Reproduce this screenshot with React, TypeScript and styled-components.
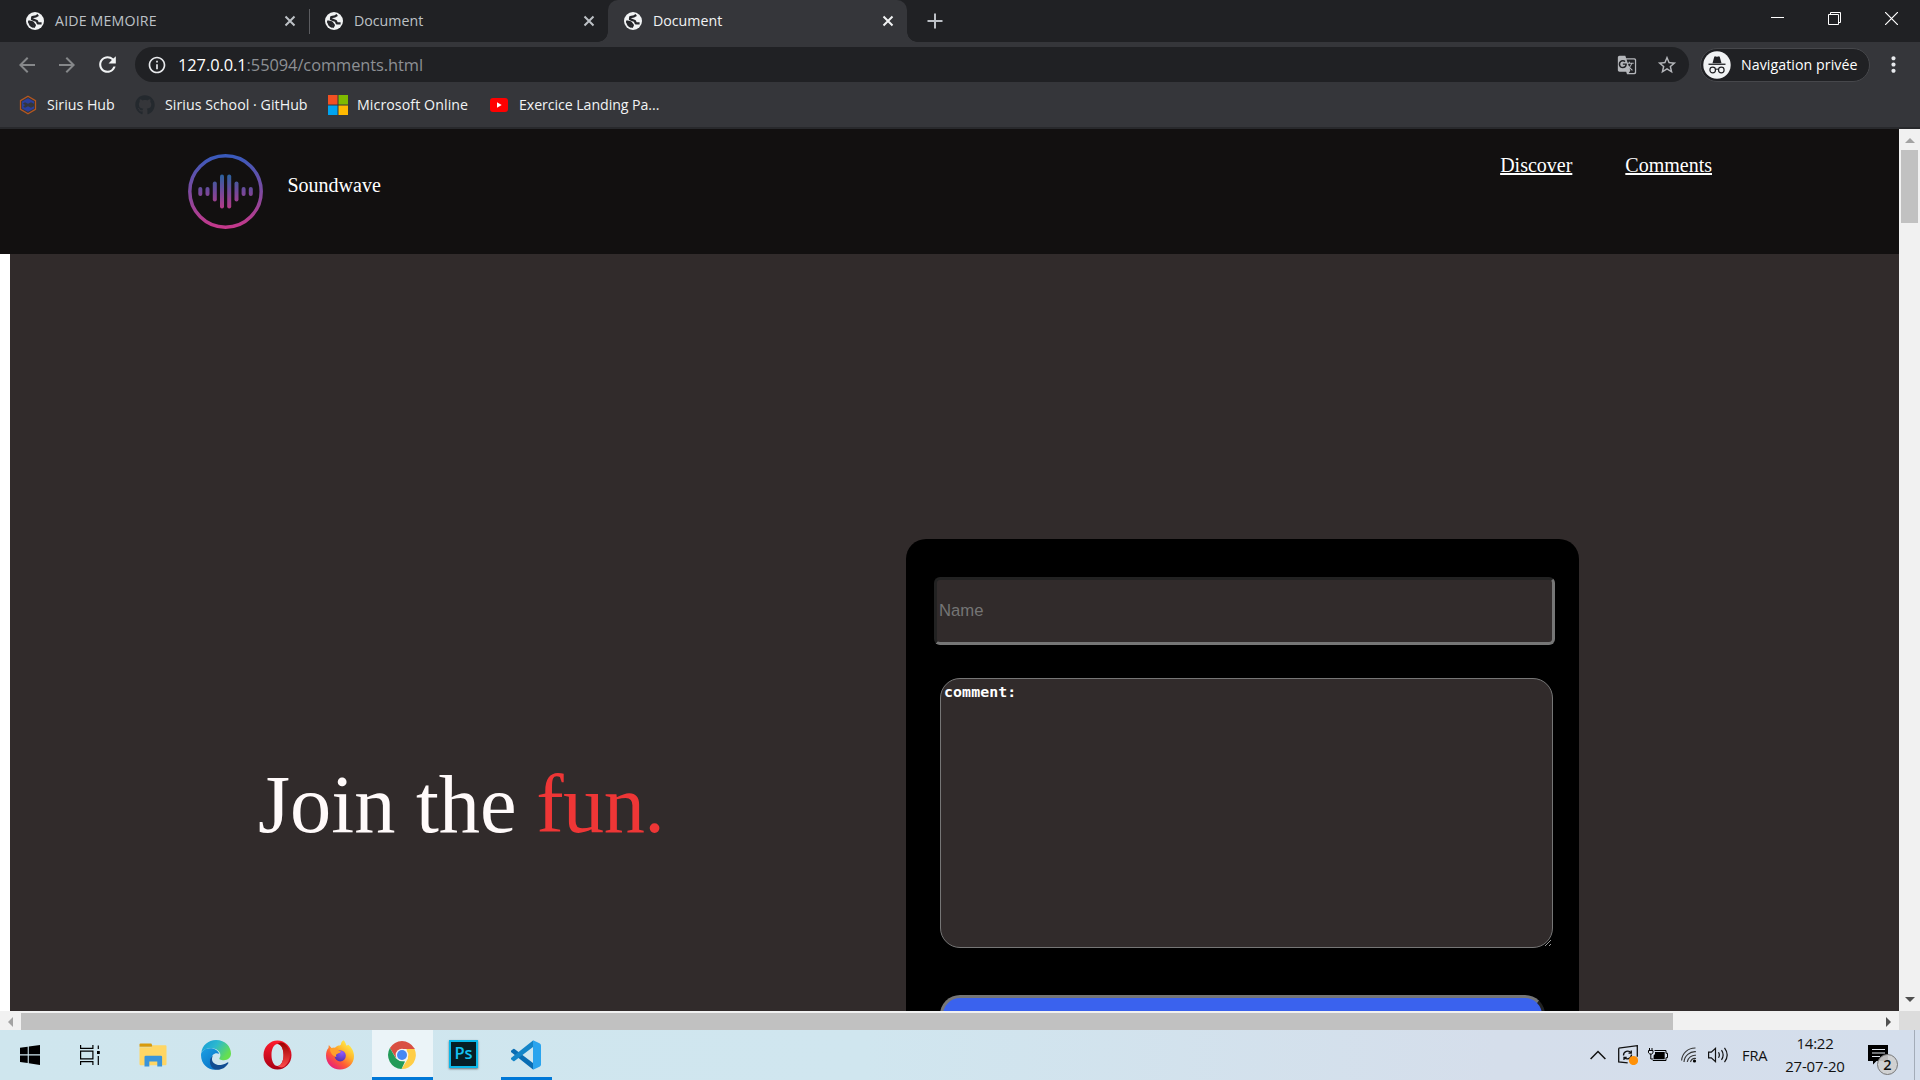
import React from 'react';
import styled, { createGlobalStyle } from 'styled-components';
import { MdArrowBack, MdArrowForward, MdRefresh, MdInfoOutline, MdStarBorder, MdGTranslate, MdMoreVert } from 'react-icons/md';
import { FaGithub } from 'react-icons/fa';

const ui = `"Open Sans", "Noto Sans", sans-serif`;
const serif = `"Liberation Serif", "Times New Roman", serif`;

const GlobalStyle = createGlobalStyle`
  * { box-sizing: border-box; }
  html, body { margin: 0; padding: 0; background: #202124; overflow: hidden; }
  svg { display: block; flex: none; }
`;

const Desktop = styled.div`
  width: 1920px;
  height: 1080px;
  display: flex;
  flex-direction: column;
  overflow: hidden;
  font-family: ${ui};
`;

/* Browser frame */
const TabStrip = styled.div`
  height: 42px;
  flex: none;
  display: flex;
  background: #202124;
  padding-left: 10px;
`;
const Tab = styled.div<{ $active?: boolean; $w: number; $pl?: number }>`
  position: relative;
  width: ${p => p.$w}px;
  height: 42px;
  display: flex;
  align-items: center;
  padding: 0 11px 0 ${p => p.$pl ?? 16}px;
  color: ${p => (p.$active ? '#f1f3f4' : '#bdc1c6')};
  background: ${p => (p.$active ? '#35363a' : 'transparent')};
  border-radius: 10px 10px 0 0;
  ${p => p.$active && `
    &::before, &::after {
      content: '';
      position: absolute;
      bottom: 0;
      width: 10px;
      height: 10px;
    }
    &::before { left: -10px; background: radial-gradient(circle at 0 0, #202124 9.5px, #35363a 10px); }
    &::after { right: -10px; background: radial-gradient(circle at 100% 0, #202124 9.5px, #35363a 10px); }
  `}
`;
const TabTitle = styled.span<{ $ls?: number }>`
  flex: 1;
  margin-left: 11px;
  font-size: 14.2px;
  line-height: 20px;
  padding-bottom: 1px;
  letter-spacing: ${p => p.$ls ?? 0}px;
  white-space: nowrap;
`;
const TabDivider = styled.div`
  width: 1px;
  height: 25px;
  margin-top: 9px;
  background: #5b5c60;
`;
const NewTab = styled.div`
  padding: 13px 0 0 20px;
`;
const WindowButtons = styled.div`
  display: flex;
  margin-left: auto;
  gap: 44px;
  padding: 12px 22px 0 0;
`;

const Toolbar = styled.div`
  height: 45px;
  flex: none;
  display: flex;
  align-items: center;
  background: #35363a;
  padding: 0 14px 0 15px;
`;
const NavButton = styled.div<{ $dim?: boolean; $ml?: number }>`
  color: ${p => (p.$dim ? '#86888a' : '#f1f3f4')};
  margin-left: ${p => p.$ml ?? 0}px;
`;
const AddressBar = styled.div`
  width: 1554px;
  height: 35px;
  margin: 0 11px 0 15px;
  border-radius: 18px;
  background: #202124;
  display: flex;
  align-items: center;
  padding: 0 11px 0 12px;
  color: #e8eaed;
`;
const Url = styled.span`
  flex: 1;
  margin-left: 11px;
  font-size: 16.4px;
  line-height: 22px;
  letter-spacing: -0.06px;
  color: #8d9094;
  b { font-weight: 400; color: #fff; }
`;
const OmniIcon = styled.span`
  color: #b4b6ba;
  margin-left: 19px;
`;
const Incognito = styled.div`
  width: 170px;
  height: 34px;
  border-radius: 17px;
  border: 1px solid #46474b;
  background: #202124;
  display: flex;
  align-items: center;
  padding-left: 2px;
  gap: 10px;
  color: #fff;
  font-size: 14.2px;
  letter-spacing: 0.06px;
  white-space: nowrap;
`;
const Menu = styled.div`
  color: #e8eaed;
  margin-left: 11px;
`;
const Bookmarks = styled.div`
  height: 42px;
  flex: none;
  display: flex;
  background: #35363a;
  border-bottom: 2px solid #28292c;
  padding: 0 0 5px 19px;
  align-items: center;
`;
const Bookmark = styled.div<{ $w: number; $gap: number; $ls?: number }>`
  display: flex;
  align-items: center;
  width: ${p => p.$w}px;
  gap: ${p => p.$gap}px;
  font-size: 14.2px;
  line-height: 20px;
  letter-spacing: ${p => p.$ls ?? 0}px;
  color: #f1f3f4;
  white-space: nowrap;
`;

/* Page */
const Viewport = styled.div`
  height: 882px;
  flex: none;
  display: flex;
`;
const Page = styled.div`
  width: 1899px;
  height: 882px;
  background: #fff;
  overflow: hidden;
`;
const SiteHeader = styled.header`
  height: 125px;
  background: #121010;
  display: flex;
  padding: 25px 187px 0 188px;
  font-family: ${serif};
  font-size: 20px;
  line-height: 23px;
  color: #fff;
`;
const Brand = styled.span`
  margin: 20px 0 0 24.5px;
`;
const SiteNav = styled.nav`
  display: flex;
  gap: 53px;
  margin-left: auto;
  a { color: #fff; text-decoration: underline; text-decoration-thickness: 2px; text-underline-offset: 1px; }
`;
const Hero = styled.main`
  margin-left: 10px;
  height: 757px;
  background: #312b2b;
  display: flex;
  overflow: hidden;
`;
const Headline = styled.h1`
  width: 896px;
  margin: 0;
  padding: 504px 0 0 248px;
  font: 400 82.4px/94px ${serif};
  color: #fffafa;
  white-space: nowrap;
  span { color: #ee3636; letter-spacing: -0.6px; margin-left: -1px; }
`;
const Card = styled.form`
  width: 673px;
  height: 640px;
  margin-top: 285px;
  background: #000;
  border-radius: 20px;
  padding: 38px 24px 0 28px;
  display: flex;
  flex-direction: column;
`;
const NameInput = styled.input`
  width: 621px;
  height: 68px;
  border: 3px solid;
  border-color: #222 #767676 #767676 #222;
  border-radius: 6px;
  background: #312b2b;
  padding: 0 2px;
  font: 16.67px "Liberation Sans", Arial, sans-serif;
  &::placeholder { color: #757575; opacity: 1; }
`;
const CommentBox = styled.textarea`
  width: 613px;
  height: 270px;
  margin: 33px 0 0 6px;
  border: 1px solid #767676;
  border-radius: 20px;
  background: #312b2b;
  color: #fff;
  padding: 3px;
  font: bold 14.9px/20px "DejaVu Sans Mono", monospace;
  letter-spacing: 0.08px;
  resize: both;
  outline: none;
`;
const Submit = styled.button`
  width: 605px;
  height: 70px;
  flex: none;
  margin: 47px 0 0 6px;
  border: 3px solid;
  border-color: #767676 #222 #222 #767676;
  border-radius: 20px;
  background: #3a62ee;
`;

/* Scrollbars */
const VScroll = styled.div`
  width: 21px;
  height: 882px;
  background: #f1f1f1;
  display: flex;
  flex-direction: column;
  align-items: center;
`;
const VThumb = styled.div`
  width: 17px;
  height: 73px;
  margin-top: 7px;
  background: #c1c1c1;
`;
const HScroll = styled.div`
  height: 19px;
  flex: none;
  display: flex;
  background: #f1f1f1;
`;
const HThumb = styled.div`
  width: 1652px;
  height: 17px;
  margin: 2px 0 0 8px;
  background: #c1c1c1;
`;
const Corner = styled.div`
  width: 21px;
  height: 19px;
  margin-left: 8px;
  background: #dcdcdc;
`;
const Arrow = styled.div<{ $dir: 'up' | 'down' | 'left' | 'right' }>`
  width: 0;
  height: 0;
  flex: none;
  border: 5px solid transparent;
  ${p => p.$dir === 'up' && 'border-top: 0; border-bottom-color: #a3a3a3; margin-top: 9px;'}
  ${p => p.$dir === 'down' && 'border-bottom: 0; border-top-color: #505050; margin: auto 0 9px;'}
  ${p => p.$dir === 'left' && 'border-left: 0; border-right-color: #a3a3a3; margin: 6px 0 0 8px;'}
  ${p => p.$dir === 'right' && 'border-right: 0; border-left-color: #505050; margin: 6px 0 0 auto;'}
`;

/* Taskbar */
const Taskbar = styled.div`
  height: 50px;
  flex: none;
  display: flex;
  background: linear-gradient(90deg, #cfe6ee 0%, #d0e6ef 45%, #d5deeb 78%, #d4deec 100%);
`;
const TaskItem = styled.div<{ $w: number; $active?: boolean; $bar?: boolean }>`
  width: ${p => p.$w}px;
  height: 50px;
  display: flex;
  align-items: center;
  justify-content: center;
  background: ${p => (p.$active ? '#ebf4f8' : 'transparent')};
  border-bottom: ${p => (p.$bar ? '3px solid #0078d7' : '0')};
  padding-top: ${p => (p.$bar ? 3 : 0)}px;
  padding-right: ${p => (p.$bar ? 2 : 0)}px;
`;
const Spacer = styled.div<{ $w: number }>`
  width: ${p => p.$w}px;
`;
const PsBox = styled.div`
  width: 29px;
  height: 28px;
  border: 2px solid #0bb8ea;
  background: #061e26;
  color: #14c0f2;
  font-size: 16.5px;
  font-weight: 600;
  line-height: 22px;
  text-align: center;
  margin-bottom: 2px;
  box-shadow: 0 1px 2px rgba(0, 0, 0, 0.5);
`;
const Tray = styled.div`
  margin-left: auto;
  width: 330px;
  display: flex;
  align-items: center;
  color: #111;
`;
const Lang = styled.span`
  width: 43px;
  margin-left: 13px;
  font-size: 14.6px;
  line-height: 20px;
  letter-spacing: -0.1px;
`;
const Clock = styled.div`
  width: 60px;
  display: flex;
  flex-direction: column;
  align-items: center;
  font-size: 15px;
  line-height: 23px;
  white-space: nowrap;
  letter-spacing: -0.2px;
`;
const Notify = styled.div`
  position: relative;
  width: 30px;
  height: 32px;
  margin: 12px 0 0 23px;
`;
const Badge = styled.span`
  position: absolute;
  left: 9px;
  top: 9px;
  width: 21px;
  height: 21px;
  border-radius: 50%;
  border: 1px solid #777;
  background: rgba(207, 207, 207, 0.9);
  font-size: 14.5px;
  font-weight: 600;
  line-height: 19px;
  text-align: center;
`;
const ShowDesktop = styled.div`
  width: 6px;
  height: 50px;
  margin-left: auto;
  border-left: 1px solid #a3acb8;
`;

const CloseIcon = () => (
  <svg width="16" height="16" viewBox="0 0 16 16" stroke="currentColor" strokeWidth="2"><path d="M3.500 3.500 12.500 12.500M12.500 3.500 3.500 12.500" /></svg>
);

const Globe = () => (
  <svg width="18" height="18" viewBox="0 0 18 18">
    <circle cx="9" cy="9" r="9" fill="#f1f3f4" />
    <g fill="none" stroke="#25262a" strokeWidth="2.300" strokeLinejoin="round">
      <path d="M12.300 3 10 4.300 6.300 5.200 6 7.200 10.800 9 11.800 11.300 15.600 11.300" />
      <path d="M2.300 9.500 6.700 10.300 8.800 13.200 7.600 15.600" />
    </g>
    <path d="M2 9 5.500 9.500 8 12.500 7.300 15.900Q2.300 14.500 2 9z" fill="#25262a" />
  </svg>
);

const IncognitoIcon = () => (
  <svg width="28" height="28" viewBox="0 0 28 28">
    <circle cx="14" cy="14" r="13.700" fill="#f1f3f4" />
    <path d="M9.500 12.200 11.200 6q.4-1 1.400-.6l1.400.4 1.400-.4q1-.4 1.400.6l1.700 6.200z" fill="#202124" />
    <rect x="5.500" y="12.600" width="17" height="1.300" fill="#202124" />
    <g fill="none" stroke="#202124" strokeWidth="1.200">
      <circle cx="9.700" cy="19" r="2.800" />
      <circle cx="18.300" cy="19" r="2.800" />
      <path d="M12.500 18.500q1.500-1 3 0" />
    </g>
  </svg>
);

const SoundLogo = () => {
  const bars: [number, number][] = [[12.3, 4.5], [19.5, 4.5], [26.8, 10], [34, 17], [41.2, 17], [48.5, 10], [55.6, 4.5], [62.8, 4.5]];
  return (
    <svg width="75" height="75" viewBox="0 0 75 75">
      <defs>
        <linearGradient id="ring" gradientUnits="userSpaceOnUse" x1="0" y1="0" x2="0" y2="75">
          <stop offset="0" stopColor="#365bbd" />
          <stop offset=".5" stopColor="#7d4a9f" />
          <stop offset="1" stopColor="#c8378a" />
        </linearGradient>
        <linearGradient id="bars" gradientUnits="userSpaceOnUse" x1="0" y1="20" x2="0" y2="55">
          <stop offset="0" stopColor="#27639f" />
          <stop offset=".5" stopColor="#71489a" />
          <stop offset="1" stopColor="#b83a86" />
        </linearGradient>
      </defs>
      <circle cx="37.5" cy="37.5" r="35.7" fill="none" stroke="url(#ring)" strokeWidth="3.5" />
      {bars.map(([x, h]) => (
        <rect key={x} x={x - 2} y={37.5 - h} width="4" height={h * 2} rx="2" fill="url(#bars)" />
      ))}
    </svg>
  );
};

const SiriusIcon = () => (
  <svg width="18" height="20" viewBox="0 0 18 20">
    <path d="M9 1.300 16.500 5.700v8.600L9 18.700 1.500 14.300V5.700z" fill="none" stroke="#b5571f" strokeWidth="1.300" />
    <path d="M9 3.200 15 6.500v2.200l-3-1.500-3 1.500-3-1.500-3 2V6.500zM3 11l3 1.800 3-1.500 3 1.500 3-1.500v2.200l-6 3.300-6-3.300z" fill="#2b3f9b" />
    <path d="M3 8l3 2-3 3z" fill="#2b3f9b" />
  </svg>
);

const MicrosoftIcon = () => (
  <svg width="20" height="20" viewBox="0 0 20 20">
    <path d="M0 0h9.500v9.500H0z" fill="#f25022" />
    <path d="M10.500 0H20v9.500h-9.500z" fill="#7fba00" />
    <path d="M0 10.500h9.500V20H0z" fill="#00a4ef" />
    <path d="M10.500 10.500H20V20h-9.500z" fill="#ffb900" />
  </svg>
);

const YoutubeIcon = () => (
  <svg width="18" height="14" viewBox="0 0 18 14">
    <rect width="18" height="14" rx="3" fill="#f00" />
    <path d="M7 4.200v5.600L11.700 7z" fill="#fff" />
  </svg>
);

const WindowsIcon = () => (
  <svg width="20" height="20" viewBox="0 0 20 20">
    <path d="M0 2.800 7.700 1.700v7.600H0zM8.800 1.500 20 0v9.300H8.800zM0 10.400h7.700V18L0 17zM8.800 10.400H20V20L8.800 18.300z" fill="#000" />
  </svg>
);

const TaskViewIcon = () => (
  <svg width="20" height="20" viewBox="0 0 20 20" fill="none" stroke="#000" strokeWidth="1.200">
    <path d="M.600 0v3.400h12.300V0M.600 20v-3.400h12.300V20M.600 6.200h12.300v7.600H.600zM18.300.500v3.500M18.300 11v9" />
    <path d="M17 6h2.800v3H17z" fill="#000" stroke="none" />
  </svg>
);

const FolderIcon = () => (
  <svg width="28" height="24" viewBox="0 0 28 24">
    <path d="M.500 1.500Q.500.500 1.500.500h10.800l1.600 3.300H.500z" fill="#d99a0a" />
    <path d="M.500 4.200h11.700l2-1.900h12.300q1 0 1 1V21q0 1.200-1.200 1.200H1.700Q.500 22.200.500 21z" fill="#ffd664" />
    <path d="M5.500 23.500V14q0-1.300 1.300-1.300h15q1.300 0 1.300 1.300v9.500h-4.800v-5h-8v5z" fill="#3994da" />
  </svg>
);

const EdgeIcon = () => (
  <svg width="30" height="30" viewBox="0 0 30 30">
    <defs>
      <linearGradient id="edgeTop" x1="0" y1="0" x2="1" y2=".5">
        <stop offset="0" stopColor="#1499d8" /><stop offset=".5" stopColor="#2cb8cf" /><stop offset="1" stopColor="#66df4f" />
      </linearGradient>
      <linearGradient id="edgeLeft" x1="0" y1="0" x2=".8" y2="1">
        <stop offset="0" stopColor="#1ba0e3" /><stop offset="1" stopColor="#0870c5" />
      </linearGradient>
    </defs>
    <path d="M.300 13C1 5.500 7.200 0 15 0c9.500 0 15 7 15 13.500 0 4.500-3.500 6.700-7 6.700-3.600 0-5.300-1.200-4.500-2.300 2.400-3.400-.200-8-5-9.200C7.500 7.500 2 9.200.300 13z" fill="url(#edgeTop)" />
    <path d="M0 15C0 11 4 8.200 9.200 8.200c4.700 0 8 2.600 9.100 5.600-4-2-7.800.700-7.800 5 0 5 4.800 9.200 9 9.500C11.500 32.500 0 27 0 15z" fill="url(#edgeLeft)" />
    <path d="M11.900 15.700c-3.300 6 2.700 10.600 9 9.100 2.600-.600 4.300-1.800 5.600-2.400.700-.300 1.200.300.800.900C22.500 31.500 11.500 32 9.300 24.500c-1-3.600 0-7 2.600-8.800z" fill="#124d92" />
  </svg>
);

const OperaIcon = () => (
  <svg width="29" height="30" viewBox="0 0 29 30">
    <defs>
      <linearGradient id="operaL" x1="0" y1="0" x2="0" y2="1"><stop offset="0" stopColor="#ff1b2d" /><stop offset="1" stopColor="#a70014" /></linearGradient>
      <linearGradient id="operaR" x1="0" y1="0" x2="0" y2="1"><stop offset="0" stopColor="#9c0000" /><stop offset="1" stopColor="#ff4b4b" /></linearGradient>
    </defs>
    <path fillRule="evenodd" d="M14.500.500a14 14.500 0 1 0 0 29 14 14.500 0 1 0 0-29zM14.500 4c3.700 0 6 5 6 11s-2.300 11-6 11-6-5-6-11 2.300-11 6-11z" fill="url(#operaL)" />
    <path d="M14.500 4c1.500-1.500 4.500-2 7-.500A14 14.500 0 0 1 21.500 26.500c-2.500 1.500-5.500 1-7-.500 3.700 0 6-5 6-11s-2.300-11-6-11z" fill="url(#operaR)" />
  </svg>
);

const FirefoxIcon = () => (
  <svg width="28" height="30" viewBox="0 0 28 30">
    <defs>
      <linearGradient id="fox" x1=".9" y1=".1" x2=".2" y2="1">
        <stop offset="0" stopColor="#fff44f" /><stop offset=".35" stopColor="#ffb52b" /><stop offset=".65" stopColor="#ff5a36" /><stop offset="1" stopColor="#e31587" />
      </linearGradient>
      <radialGradient id="foxGlobe" cx=".65" cy=".2" r=".9"><stop offset="0" stopColor="#9059ff" /><stop offset="1" stopColor="#4b2fa8" /></radialGradient>
    </defs>
    <path d="M17.500.300c1.500 1.200 2.300 3 2.800 5.200 1-.100 1.500-.300 2-.800C25.500 7 28 11.500 28 16c0 8-6 13.500-14 13.500S0 23.500 0 15.500c0-3.300 1-6 2.500-7.500l.300-3 2.700 3 3.500-.300C10.500 6 11.500 6 12.500 5.500c1.500 0 2.300-.500 2.500-1.500.3-1.500 1-3 2.500-3.700z" fill="url(#fox)" />
    <circle cx="14.200" cy="15.800" r="5.600" fill="url(#foxGlobe)" />
    <path d="M4 8.500c2.500-1.200 5.500-1 8 .5-.500 1.500 1 2 3 2.300-.5 1.700-2.500 2-3.500 2.400-1.500.600-2 1.800-1 3.300-3.500-.500-6.500-4-6.500-8.500z" fill="#ffa02c" />
  </svg>
);

const ChromeIcon = () => (
  <svg width="28" height="30" viewBox="0 0 28 30">
    <path d="M1.900 8A14 14 0 0 1 26.100 8L27 9H14L8 18z" fill="#d94f42" />
    <path d="M26.500 9A14 14 0 0 1 13.500 29L20 18.500 18.500 9z" fill="#ffcd46" />
    <path d="M1.900 8 8 18.500 14 21l3 .5L13.500 29A14 14 0 0 1 1.900 8z" fill="#229b58" />
    <circle cx="14" cy="15" r="6.300" fill="#f3f3f3" />
    <circle cx="14" cy="15" r="5" fill="#4688f4" />
  </svg>
);

const CodeIcon = () => (
  <svg width="30" height="30" viewBox="0 0 30 30">
    <path d="M0 10.800 2.200 9q.6-.500 1.300 0L22 23v6.500L.300 12.300q-.8-.700-.300-1.500z" fill="#0a6db3" />
    <path d="M0 19.200 2.200 21q.6.500 1.300 0L22 7V.500L.300 17.700q-.8.700-.300 1.500z" fill="#1485c8" />
    <path d="M22 .300 28.500 3.300Q30 4 30 5.500v19q0 1.500-1.500 2.200L22 29.700z" fill="#2aa4ee" />
  </svg>
);

const TrayChevron = () => (
  <svg width="16" height="10" viewBox="0 0 16 10" fill="none" stroke="#111" strokeWidth="1.500"><path d="M.600 9 8 1.500 15.400 9" /></svg>
);
const UpdateIcon = () => (
  <svg width="20" height="20" viewBox="0 0 20 20" fill="none" stroke="#111" strokeWidth="1.300">
    <path d="M.700 3.200 19.300.700v11M.700 3.200v13.600l9 1" />
    <path d="M5.500 10.500a4.200 4.200 0 0 1 7.500-2.700M13.300 5.500v2.700h-2.800M13.500 9.500a4.200 4.200 0 0 1-7 3.200M6 15v-2.500h2.700" />
    <circle cx="15.500" cy="15.500" r="4.600" fill="#ff9108" stroke="none" />
  </svg>
);
const BatteryIcon = () => (
  <svg width="20" height="14" viewBox="0 0 20 14">
    <path d="M1.500 0v2.500M4 0v2.500M2.800 6v5h2.500" fill="none" stroke="#000" strokeWidth="1" />
    <path d="M.500 2.500H5v2.300L3.700 6H1.800L.500 4.800z" fill="#dbe2ed" stroke="#000" strokeWidth="1" />
    <path d="M6.500 2.500H18v2.800h1.500v4.400H18v2.800H4.800" fill="none" stroke="#000" />
    <path d="M7 4h9.700v7.200H5.600V7.500L7 6z" fill="#000" />
  </svg>
);
const WifiIcon = () => (
  <svg width="16" height="16" viewBox="0 0 16 16" fill="none" stroke="#333" strokeWidth="1.100">
    <path d="M.600 13.500A13.500 13.500 0 0 1 14.500 1M3 15A11 11 0 0 1 15 4.700M6.200 15A8 8 0 0 1 15 8.300M9.500 15A5 5 0 0 1 15 11.500" />
    <circle cx="13.500" cy="14" r="1.600" fill="#000" stroke="none" />
  </svg>
);
const VolumeIcon = () => (
  <svg width="21" height="18" viewBox="0 0 21 18" fill="none" stroke="#111" strokeWidth="1.200">
    <path d="M.600 6.200h2.700L7.500 2.300v13.400l-4.200-3.900H.600z" />
    <path d="M10.500 6.300q1.700 2.700 0 5.400M13.500 4.200q3.300 4.800 0 9.600M16.500 1.800q5.400 7.200 0 14.400" />
  </svg>
);
const ActionIcon = () => (
  <svg width="20" height="20" viewBox="0 0 20 20">
    <path d="M0 0h20v16H8.500L5 19.500V16H0z" fill="#000" />
    <path d="M4 4.500h13M4 8h13M4 11.500h8" stroke="#dfe5ec" strokeWidth="1.100" />
  </svg>
);

export default function App() {
  return (
    <Desktop>
      <GlobalStyle />
      <TabStrip>
        <Tab $w={299}><Globe /><TabTitle $ls={0.16}>AIDE MEMOIRE</TabTitle><CloseIcon /></Tab>
        <TabDivider />
        <Tab $w={298} $pl={15}><Globe /><TabTitle>Document</TabTitle><CloseIcon /></Tab>
        <Tab $w={299} $active><Globe /><TabTitle>Document</TabTitle><CloseIcon /></Tab>
        <NewTab>
          <svg width="16" height="16" viewBox="0 0 16 16" stroke="#bdc1c6" strokeWidth="2"><path d="M8 .500v15M.500 8h15" /></svg>
        </NewTab>
        <WindowButtons>
          <svg width="13" height="13" viewBox="0 0 13 13"><path d="M0 5.500h13" stroke="#fff" /></svg>
          <svg width="13" height="13" viewBox="0 0 13 13" fill="none" stroke="#fff"><path d="M.500 2.500h10v10H.500zM2.500 2.500v-2h10v10h-2" /></svg>
          <svg width="13" height="13" viewBox="0 0 13 13" stroke="#fff" strokeWidth="1.200"><path d="M0 0l13 13M13 0 0 13" /></svg>
        </WindowButtons>
      </TabStrip>
      <Toolbar>
        <NavButton $dim><MdArrowBack size={24} /></NavButton>
        <NavButton $dim $ml={16}><MdArrowForward size={24} /></NavButton>
        <NavButton $ml={16}><MdRefresh size={25} /></NavButton>
        <AddressBar>
          <MdInfoOutline size={20} />
          <Url><b>127.0.0.1</b>:55094/comments.html</Url>
          <OmniIcon><MdGTranslate size={20} /></OmniIcon>
          <OmniIcon><MdStarBorder size={22} /></OmniIcon>
        </AddressBar>
        <Incognito><IncognitoIcon />Navigation privée</Incognito>
        <Menu><MdMoreVert size={25} /></Menu>
      </Toolbar>
      <Bookmarks>
        <Bookmark $w={116} $gap={10}><SiriusIcon />Sirius Hub</Bookmark>
        <Bookmark $w={193} $gap={10} $ls={0.04}><FaGithub size={20} color="#24292e" />Sirius School · GitHub</Bookmark>
        <Bookmark $w={162} $gap={9} $ls={0.08}><MicrosoftIcon />Microsoft Online</Bookmark>
        <Bookmark $w={200} $gap={11} $ls={-0.07}><YoutubeIcon />Exercice Landing Pa...</Bookmark>
      </Bookmarks>
      <Viewport>
        <Page>
          <SiteHeader>
            <SoundLogo />
            <Brand>Soundwave</Brand>
            <SiteNav><a>Discover</a><a>Comments</a></SiteNav>
          </SiteHeader>
          <Hero>
            <Headline>Join the <span>fun.</span></Headline>
            <Card>
              <NameInput placeholder="Name" />
              <CommentBox defaultValue="comment:" spellCheck={false} />
              <Submit type="button" />
            </Card>
          </Hero>
        </Page>
        <VScroll><Arrow $dir="up" /><VThumb /><Arrow $dir="down" /></VScroll>
      </Viewport>
      <HScroll>
        <Arrow $dir="left" /><HThumb /><Arrow $dir="right" /><Corner />
      </HScroll>
      <Taskbar>
        <TaskItem $w={60}><WindowsIcon /></TaskItem>
        <TaskItem $w={60}><TaskViewIcon /></TaskItem>
        <TaskItem $w={66}><FolderIcon /></TaskItem>
        <TaskItem $w={60}><EdgeIcon /></TaskItem>
        <TaskItem $w={62}><OperaIcon /></TaskItem>
        <TaskItem $w={64}><FirefoxIcon /></TaskItem>
        <TaskItem $w={61} $active $bar><ChromeIcon /></TaskItem>
        <TaskItem $w={61}><PsBox>Ps</PsBox></TaskItem>
        <Spacer $w={7} />
        <TaskItem $w={51} $bar><CodeIcon /></TaskItem>
        <Tray>
          <TrayChevron /><Spacer $w={12} />
          <UpdateIcon /><Spacer $w={10} />
          <BatteryIcon /><Spacer $w={13} />
          <WifiIcon /><Spacer $w={11} />
          <VolumeIcon />
          <Lang>FRA</Lang>
          <Clock><span>14:22</span><span>27-07-20</span></Clock>
          <Notify><ActionIcon /><Badge>2</Badge></Notify>
          <ShowDesktop />
        </Tray>
      </Taskbar>
    </Desktop>
  );
}
